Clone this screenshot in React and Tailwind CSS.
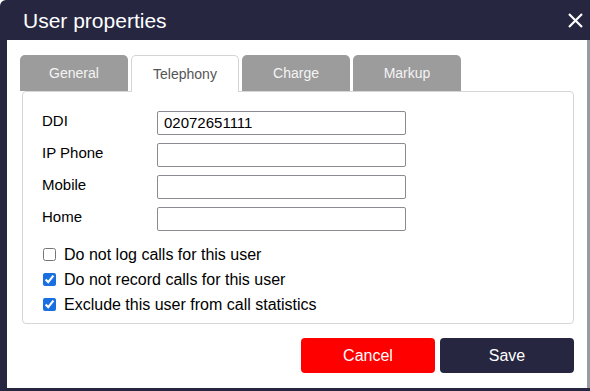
import React from 'react'

const fields = [
  { label: 'DDI', value: '02072651111' },
  { label: 'IP Phone', value: '' },
  { label: 'Mobile', value: '' },
  { label: 'Home', value: '' },
]

const options = [
  { label: 'Do not log calls for this user', checked: false },
  { label: 'Do not record calls for this user', checked: true },
  { label: 'Exclude this user from call statistics', checked: true },
]

const tabs = ['General', 'Telephony', 'Charge', 'Markup']

export default function App() {
  return (
    <div className="w-[590px] h-[391px] bg-[#262641] rounded-tl-[6px] flex flex-col font-['Liberation_Sans',Arial,sans-serif] overflow-hidden">
      <div className="h-[40px] shrink-0 flex items-center justify-between pl-[23px] pr-[6px]">
        <span className="text-white text-[21px] leading-none">User properties</span>
        <svg width="17" height="17" viewBox="0 0 17 17" className="text-white">
          <path d="M2 2 L15 15 M15 2 L2 15" stroke="currentColor" strokeWidth="2.2" fill="none" />
        </svg>
      </div>
      <div className="flex-1 ml-[7px] mb-[3px] bg-white border-r-[3px] border-[#9a9aa2] flex flex-col">
        <div className="flex gap-[3px] pl-[13px] pt-[15px]">
          {tabs.map((t) => (
            <div
              key={t}
              className={
                t === 'Telephony'
                  ? 'w-[108px] h-[37px] -mb-px relative z-10 bg-white border border-b-0 border-[#d4d4d4] rounded-t-[5px] flex items-center justify-center text-[14px] text-[#555]'
                  : 'w-[108px] h-[36px] bg-[#9c9c9c] rounded-t-[5px] flex items-center justify-center text-[14px] text-[#f4f4f4]'
              }
            >
              {t}
            </div>
          ))}
        </div>
        <div className="ml-[15px] mr-[13px] h-[233px] border border-[#d6d6d6] rounded-[4px] pl-[19px] pt-[19px]">
          <div className="flex flex-col gap-[8px]">
            {fields.map((f) => (
              <div key={f.label} className="flex items-center h-[24px]">
                <span className="w-[115px] text-[15px] text-black mb-[4px]">{f.label}</span>
                <div className="w-[249px] h-[24px] border border-[#8a8a90] rounded-[2px] px-[6px] flex items-center text-[15px] text-black">
                  {f.value}
                </div>
              </div>
            ))}
          </div>
          <div className="mt-[11px] flex flex-col">
            {options.map((o) => (
              <label key={o.label} className="flex items-center h-[25px] gap-[8px] text-[16px] text-black">
                <input
                  type="checkbox"
                  defaultChecked={o.checked}
                  className="w-[13px] h-[13px] m-0 ml-[1px] accent-[#1a6fe0]"
                />
                {o.label}
              </label>
            ))}
          </div>
        </div>
        <div className="flex justify-end gap-[5px] mr-[13px] mt-[14px]">
          <button className="w-[134px] h-[35px] bg-[#ff0000] rounded-[4px] text-white text-[16px]">Cancel</button>
          <button className="w-[134px] h-[35px] bg-[#262641] rounded-[4px] text-white text-[16px]">Save</button>
        </div>
      </div>
    </div>
  )
}
